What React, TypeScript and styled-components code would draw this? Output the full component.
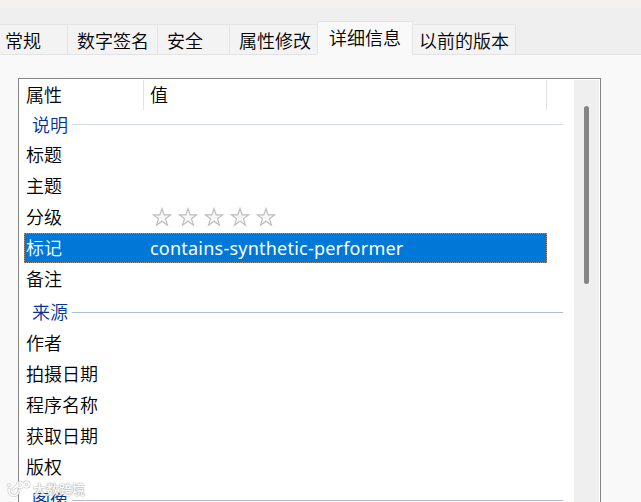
import styled, {createGlobalStyle} from 'styled-components';

const tabs = [
  {label: '常规', width: 68, indent: 5},
  {label: '数字签名', width: 90, indent: 9},
  {label: '安全', width: 72, indent: 9},
  {label: '属性修改', width: 88, indent: 9},
  {label: '详细信息', width: 96, indent: 11, active: true},
  {label: '以前的版本', width: 103, indent: 6},
];

const groups = [
  {
    title: '说明',
    height: 30,
    textHeight: 28,
    lineTop: 14,
    line: '#d5dae5',
    rows: [
      {name: '标题'},
      {name: '主题'},
      {name: '分级', rating: true},
      {name: '标记', value: 'contains-synthetic-performer', selected: true},
      {name: '备注'},
    ],
  },
  {
    title: '来源',
    height: 33,
    textHeight: 33,
    lineTop: 17,
    line: '#afbdd3',
    rows: [
      {name: '作者'},
      {name: '拍摄日期'},
      {name: '程序名称'},
      {name: '获取日期'},
      {name: '版权'},
    ],
  },
  {
    title: '图像',
    height: 32,
    textHeight: 35,
    lineTop: 17,
    line: '#afbdd8',
    rows: [],
  },
];

function Rating() {
  return (
    <Stars>
      {[1, 2, 3, 4, 5].map(n => (
        <svg key={n} width="20" height="20" viewBox="0 0 20 20">
          <path
            d="M10 1.5 L12.2 7.8 L18.8 7.8 L13.5 11.8 L15.5 18.2 L10 14.3 L4.5 18.2 L6.5 11.8 L1.2 7.8 L7.8 7.8 Z"
            fill="#f6f6f6"
            stroke="#bdbdbd"
            strokeWidth="1.15"
          />
        </svg>
      ))}
    </Stars>
  );
}

function App() {
  return (
    <>
      <GlobalStyle />
      <Dialog>
        <TitleStrip />
        <TabBar>
          {tabs.map(tab => (
            <Tab
              key={tab.label}
              $width={tab.width}
              $indent={tab.indent}
              $active={tab.active}
            >
              {tab.label}
            </Tab>
          ))}
        </TabBar>
        <Panel>
          <ListBox>
            <List>
              <ListHeader>
                <HeaderCell $width={125} $indent={7}>
                  属性
                </HeaderCell>
                <HeaderCell $width={403} $indent={6}>
                  值
                </HeaderCell>
              </ListHeader>
              {groups.map(group => (
                <section key={group.title}>
                  <GroupTitle
                    $height={group.height}
                    $textHeight={group.textHeight}
                  >
                    <span>{group.title}</span>
                    <GroupLine $top={group.lineTop} $color={group.line} />
                  </GroupTitle>
                  {group.rows.map(row => (
                    <Row key={row.name} $selected={row.selected}>
                      <Name>{row.name}</Name>
                      {row.rating && <Rating />}
                      {row.value && <Value>{row.value}</Value>}
                    </Row>
                  ))}
                </section>
              ))}
            </List>
            <Scrollbar>
              <Thumb />
            </Scrollbar>
          </ListBox>
        </Panel>
        <Watermark>
          <svg width="25" height="18" viewBox="0 0 25 18" fill="none">
            <g stroke="#c4c4c4" strokeWidth="3" strokeLinecap="round">
              <path d="M2 5 L4 5 M3 9 C2 17 12 18 13 10 M7 9 L12 5" />
              <circle cx="14" cy="5" r="2.7" />
              <circle cx="20.5" cy="4.5" r="2.5" />
            </g>
            <g stroke="#ffffff" strokeWidth="1.7" strokeLinecap="round">
              <path d="M2 5 L4 5 M3 9 C2 17 12 18 13 10 M7 9 L12 5" />
              <circle cx="14" cy="5" r="2.7" />
              <circle cx="20.5" cy="4.5" r="2.5" />
            </g>
          </svg>
          <span>大数跨境</span>
        </Watermark>
      </Dialog>
    </>
  );
}

const GlobalStyle = createGlobalStyle`
  * {
    box-sizing: border-box;
  }

  body {
    margin: 0;
    overflow: hidden;
  }
`;

const Dialog = styled.div`
  position: relative;
  display: flex;
  flex-direction: column;
  width: 641px;
  height: 502px;
  overflow: hidden;
  background-color: #efefef;
  color: #000;
  font-family: 'Noto Sans CJK SC', sans-serif;
  font-size: 18px;
  font-weight: 350;
  line-height: 28px;
  white-space: nowrap;
`;

const TitleStrip = styled.div`
  flex: none;
  height: 8px;
  background-color: #f4f2ef;
`;

const TabBar = styled.div`
  display: flex;
  flex: none;
  align-items: flex-end;
  height: 47px;
  box-shadow: inset 0 -1px #e3e3e3;
`;

const Tab = styled.div<{$width: number; $indent: number; $active?: boolean}>`
  flex: none;
  width: ${props => props.$width}px;
  height: ${props => (props.$active ? 34 : 31)}px;
  margin-left: ${props => (props.$active ? -1 : 0)}px;
  padding-left: ${props => props.$indent}px;
  border: 1px solid #e4e4e4;
  border-left-width: ${props => (props.$active ? 1 : 0)}px;
  border-bottom-color: ${props => (props.$active ? '#f9f9f9' : '#e3e3e3')};
  background-color: ${props => (props.$active ? '#f9f9f9' : '#f3f3f3')};
  line-height: ${props => (props.$active ? 31 : 30)}px;
`;

const Panel = styled.div`
  flex: 1;
  padding: 23px 40px 0 18px;
  background-color: #f9f9f9;
`;

const ListBox = styled.div`
  display: flex;
  height: 440px;
  padding: 1px 1px 0 5px;
  border: 1px solid #858585;
  background-color: #fff;
`;

const List = styled.div`
  flex: 1;
`;

const ListHeader = styled.div`
  display: flex;
  height: 30px;
  margin-left: -5px;
`;

const HeaderCell = styled.div<{$width: number; $indent: number}>`
  width: ${props => props.$width}px;
  padding-left: ${props => props.$indent}px;
  border-right: 1px solid #e3e3e3;
`;

const GroupTitle = styled.div<{$height: number; $textHeight: number}>`
  display: flex;
  gap: 4px;
  width: 539px;
  height: ${props => props.$height}px;
  padding-left: 8px;
  color: #003399;
  line-height: ${props => props.$textHeight}px;
`;

const GroupLine = styled.i<{$top: number; $color: string}>`
  flex: 1;
  height: 1px;
  margin-top: ${props => props.$top}px;
  background-color: ${props => props.$color};
`;

const Row = styled.div<{$selected?: boolean}>`
  display: flex;
  width: 523px;
  height: 30px;
  margin-bottom: 1px;
  padding-left: 2px;
  background-color: ${props => (props.$selected ? '#0078d7' : 'transparent')};
  color: ${props => (props.$selected ? '#fff' : 'inherit')};
  outline: ${props => (props.$selected ? '1px dotted #a58a70' : 'none')};
  outline-offset: -1px;
`;

const Name = styled.span`
  width: 124px;
`;

const Value = styled.span`
  font-family: 'Noto Sans', sans-serif;
  font-weight: 400;
  font-size: 18px;
  line-height: 30px;
  letter-spacing: 0.22px;
`;

const Stars = styled.div`
  display: flex;
  align-items: center;
  gap: 6px;
  padding-left: 2px;
`;

const Scrollbar = styled.div`
  width: 25px;
  padding: 26px 0 0 10px;
  background-color: #efefef;
`;

const Thumb = styled.div`
  width: 5px;
  height: 178px;
  border-radius: 3px;
  background-color: #858585;
`;

const Watermark = styled.div`
  position: absolute;
  left: 6px;
  top: 480px;
  display: flex;
  gap: 2px;
  opacity: 0.85;
  color: #fff;
  font-size: 13px;
  font-weight: 500;
  line-height: 18px;
  text-shadow:
    0 0 1px #888,
    0 0 2px #999;
`;

export default App;
